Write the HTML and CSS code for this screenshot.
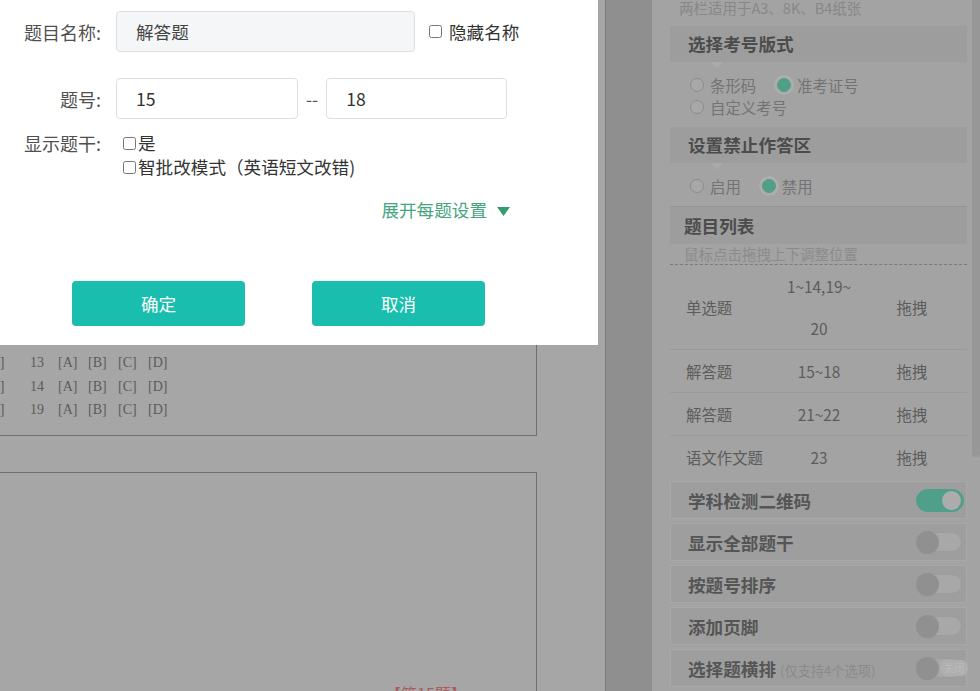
FILE: index.html
```html
<!DOCTYPE html>
<html lang="zh-CN">
<head>
<meta charset="utf-8">
<title>答题卡编辑</title>
<link rel="stylesheet" href="styles.css">
</head>
<body>
<div class="app">
  <main class="sheet">
    <section class="card card-choice">
      <div class="ans-line"><span class="opt prev">[D]</span><span class="qno">13</span><span class="opt">[A]</span><span class="opt">[B]</span><span class="opt">[C]</span><span class="opt">[D]</span></div>
      <div class="ans-line"><span class="opt prev">[D]</span><span class="qno">14</span><span class="opt">[A]</span><span class="opt">[B]</span><span class="opt">[C]</span><span class="opt">[D]</span></div>
      <div class="ans-line"><span class="opt prev">[D]</span><span class="qno">19</span><span class="opt">[A]</span><span class="opt">[B]</span><span class="opt">[C]</span><span class="opt">[D]</span></div>
    </section>
    <section class="card card-essay">
      <p class="q-title">【第15题】</p>
    </section>
  </main>
  <div class="gutter"></div>
  <aside class="panel">
    <div class="panel-body">
      <p class="top-hint">两栏适用于A3、8K、B4纸张</p>
      <h3 class="sec-head tail">选择考号版式</h3>
      <div class="radio-group">
        <div class="radio-line">
          <label class="radio"><span class="dot"></span>条形码</label>
          <label class="radio on"><span class="dot"></span>准考证号</label>
        </div>
        <div class="radio-line">
          <label class="radio"><span class="dot"></span>自定义考号</label>
        </div>
      </div>
      <h3 class="sec-head tail">设置禁止作答区</h3>
      <div class="radio-group g2">
        <div class="radio-line">
          <label class="radio"><span class="dot"></span>启用</label>
          <label class="radio on"><span class="dot"></span>禁用</label>
        </div>
      </div>
      <h3 class="sec-head list-head">题目列表</h3>
      <p class="drag-hint">鼠标点击拖拽上下调整位置</p>
      <div class="q-table">
        <div class="q-row"><span class="c-name">单选题</span><span class="c-num">1~14,19~<wbr>20</span><span class="c-drag">拖拽</span></div>
        <div class="q-row"><span class="c-name">解答题</span><span class="c-num">15~18</span><span class="c-drag">拖拽</span></div>
        <div class="q-row"><span class="c-name">解答题</span><span class="c-num">21~22</span><span class="c-drag">拖拽</span></div>
        <div class="q-row"><span class="c-name">语文作文题</span><span class="c-num">23</span><span class="c-drag">拖拽</span></div>
      </div>
      <div class="switch-row first"><span>学科检测二维码</span><span class="switch on"><i class="knob"></i></span></div>
      <div class="switch-row"><span>显示全部题干</span><span class="switch"><i class="knob"></i></span></div>
      <div class="switch-row"><span>按题号排序</span><span class="switch"><i class="knob"></i></span></div>
      <div class="switch-row"><span>添加页脚</span><span class="switch"><i class="knob"></i></span></div>
      <div class="switch-row"><span>选择题横排<small class="sub">(仅支持4个选项)</small></span><span class="switch"><i class="knob"></i><em class="sw-text">关闭</em></span></div>
    </div>
    <div class="scroll-track"><div class="scroll-thumb"></div></div>
  </aside>
</div>

<div class="modal">
  <div class="f-row">
    <span class="f-label">题目名称:</span>
    <div class="f-input name-input disabled">解答题</div>
    <label class="hide-name"><input type="checkbox" class="chk">隐藏名称</label>
  </div>
  <div class="f-row row-no">
    <span class="f-label">题号:</span>
    <div class="f-input no-input">15</div>
    <span class="dash">--</span>
    <div class="f-input no-input2">18</div>
  </div>
  <div class="f-row row-stem">
    <span class="f-label">显示题干:</span>
    <div class="opts">
      <label class="opt-line"><input type="checkbox" class="chk">是</label>
      <label class="opt-line"><input type="checkbox" class="chk">智批改模式（英语短文改错)</label>
    </div>
  </div>
  <div class="expand">展开每题设置<svg class="caret" width="13" height="9" viewBox="0 0 13 9"><path d="M0 0 H13 L6.5 9 Z" fill="#2f9d70"/></svg></div>
  <div class="btns">
    <button class="btn">确定</button>
    <button class="btn">取消</button>
  </div>
</div>
</body>
</html>
```
FILE: styles.css
```css
html, body {
  margin: 0;
  width: 980px;
  height: 691px;
  overflow: hidden;
}
body {
  position: relative;
  font-family: "Noto Sans CJK SC", "Noto Sans", sans-serif;
  background: #a6a6a6;
}
.app {
  display: flex;
  height: 691px;
}

/* answer sheet (dimmed) */
.sheet {
  flex: none;
  width: 605px;
  border-right: 1px solid #7d7d7d;
  overflow: hidden;
}
.card {
  margin-left: -20px;
  width: 557px;
  box-sizing: border-box;
  border: 1px solid #6f6f6f;
}
.card-choice {
  margin-top: 330px;
  padding: 20px 0 13px 4px;
}
.ans-line {
  display: flex;
  line-height: 23.5px;
  font-family: "Liberation Serif", serif;
  font-size: 14px;
  color: #5b5b5b;
  white-space: pre;
}
.ans-line .opt { width: 30px; flex: none; }
.ans-line .opt.prev { width: 45px; }
.ans-line .qno { width: 28px; flex: none; }
.card-essay {
  margin-top: 36px;
  height: 260px;
  padding: 210px 0 0 404px;
}
.q-title {
  margin: 0;
  font-size: 16px;
  line-height: 20px;
  color: #a85c5c;
  white-space: nowrap;
}

.gutter {
  flex: none;
  width: 46px;
  background: #8f8f8f;
}

/* right settings panel (dimmed) */
.panel {
  flex: none;
  width: 328px;
  display: flex;
  background: #a3a3a3;
}
.panel-body {
  flex: 1;
  padding: 0 5px 0 18px;
  min-width: 0;
}
.scroll-track {
  flex: none;
  width: 8px;
}
.scroll-thumb {
  height: 457px;
  background: #979797;
  border-radius: 0 0 4px 4px;
}
.top-hint {
  margin: -2px 0 0;
  padding-left: 9px;
  font-size: 14.5px;
  line-height: 20px;
  color: #878787;
}
.sec-head {
  position: relative;
  margin: 8px 0 0;
  height: 36px;
  line-height: 36px;
  padding-left: 18px;
  background: #9d9d9d;
  font-size: 17.6px;
  font-weight: 700;
  color: #4c4c4c;
}
.sec-head.tail::after {
  content: "";
  position: absolute;
  left: 41px;
  top: 100%;
  border-left: 6px solid transparent;
  border-right: 6px solid transparent;
  border-top: 7px solid #aaaaaa;
}
.radio-group {
  padding-top: 12px;
}
.radio-group.g2 {
  padding-top: 12px;
}
.radio-group + .sec-head {
  margin-top: 9px;
}
.radio-line {
  display: flex;
  padding-left: 20px;
  line-height: 22px;
  font-size: 15.4px;
  color: #737373;
}
.radio {
  display: flex;
  align-items: center;
  margin-right: 21px;
}
.dot {
  width: 14px;
  height: 14px;
  box-sizing: border-box;
  border-radius: 50%;
  border: 1px solid #8c8c8c;
  background: #a8a8a8;
  margin-right: 6px;
}
.radio.on .dot {
  background: #529f88;
  border-color: #529f88;
  box-shadow: 0 0 0 3px #adadad;
}
.sec-head.list-head {
  height: 37px;
  line-height: 37px;
  padding-left: 14px;
  border-top: 1px solid #959595;
}
.drag-hint {
  margin: 0;
  padding-left: 14px;
  height: 20px;
  line-height: 19px;
  font-size: 14.5px;
  color: #8b8b8b;
  border-bottom: 1px dashed #7b7b7b;
}
.q-row {
  display: grid;
  grid-template-columns: 111px 76px 1fr;
  align-items: center;
  line-height: 42px;
  font-size: 15.4px;
  color: #5c5c5c;
  border-bottom: 1px solid #999999;
}
.q-row:last-child {
  border-bottom: 0;
}
.c-name { padding-left: 16px; }
.c-num, .c-drag { text-align: center; }

.switch-row {
  display: flex;
  align-items: center;
  justify-content: space-between;
  box-sizing: border-box;
  height: 38px;
  margin-top: 4px;
  padding: 0 1px 0 17px;
  background: #9e9e9e;
  border: 1px solid #a8a8a8;
  font-size: 17.6px;
  font-weight: 700;
  color: #555555;
}
.switch-row.first {
  margin-top: 3px;
}
.sub {
  margin-left: 4px;
  font-size: 13.2px;
  font-weight: 400;
  color: #8a8a8a;
}
.switch {
  display: flex;
  align-items: center;
  box-sizing: border-box;
  width: 46px;
  height: 20px;
  border-radius: 10px;
  background: #a8a8a8;
  border: 1px solid #9c9c9c;
  margin-right: 3px;
}
.switch .knob {
  width: 23px;
  height: 23px;
  flex: none;
  border-radius: 50%;
  background: #909090;
  margin-left: -1px;
}
.switch.on {
  width: 48px;
  height: 23px;
  border-radius: 12px;
  margin-right: 1px;
  justify-content: flex-end;
  padding: 0 2px;
  background: #4f9f8a;
  border-color: #4f9f8a;
}
.switch.on .knob {
  width: 19px;
  height: 19px;
  background: #acacac;
  margin: 0;
}
.sw-text {
  flex: none;
  white-space: nowrap;
  margin-left: 1px;
  font-style: normal;
  font-size: 10px;
  font-weight: 400;
  line-height: 16px;
  padding: 0 4px;
  border-radius: 7px;
  color: #bcbcbc;
  background: #afafaf;
}

/* modal dialog */
.modal {
  position: absolute;
  left: 0;
  top: 0;
  width: 598px;
  height: 345px;
  box-sizing: border-box;
  padding-top: 11px;
  background: #ffffff;
  font-size: 17.6px;
  color: #333333;
}
.f-row {
  display: flex;
  align-items: center;
}
.f-label {
  flex: none;
  width: 101px;
  margin-right: 15px;
  text-align: right;
  color: #505050;
  line-height: 24px;
  font-size: 18px;
}
.f-input {
  flex: none;
  box-sizing: border-box;
  height: 41px;
  line-height: 39px;
  padding: 0 19px;
  border: 1px solid #dcdfe6;
  border-radius: 4px;
  background: #ffffff;
  color: #333333;
}
.f-input.disabled {
  background: #f5f6f8;
  color: #444444;
}
.name-input { width: 299px; }
.no-input { width: 182px; }
.no-input2 { width: 181px; }
.chk {
  width: 13px;
  height: 13px;
  margin: 0;
  flex: none;
}
.hide-name {
  display: flex;
  align-items: center;
  gap: 7px;
  margin-left: 14px;
}
.row-no {
  margin-top: 26px;
}
.dash {
  margin: 0 8px 0 8px;
  color: #555555;
}
.row-stem {
  margin-top: 12px;
  align-items: flex-start;
}
.opts {
  padding-left: 7px;
}
.opt-line {
  display: flex;
  align-items: center;
  gap: 2px;
  line-height: 24px;
}
.expand {
  margin-top: 19px;
  padding-right: 88px;
  text-align: right;
  line-height: 24px;
  color: #46a67e;
}
.caret {
  display: inline-block;
  margin-left: 10px;
  vertical-align: middle;
  position: relative;
  top: -1px;
}
.btns {
  display: flex;
  gap: 67px;
  margin-top: 59px;
  padding-left: 72px;
}
.btn {
  width: 173px;
  height: 45px;
  border: 0;
  border-radius: 4px;
  background: #19beae;
  color: #ffffff;
  font-family: inherit;
  font-size: 17.6px;
  padding: 0;
}
```
